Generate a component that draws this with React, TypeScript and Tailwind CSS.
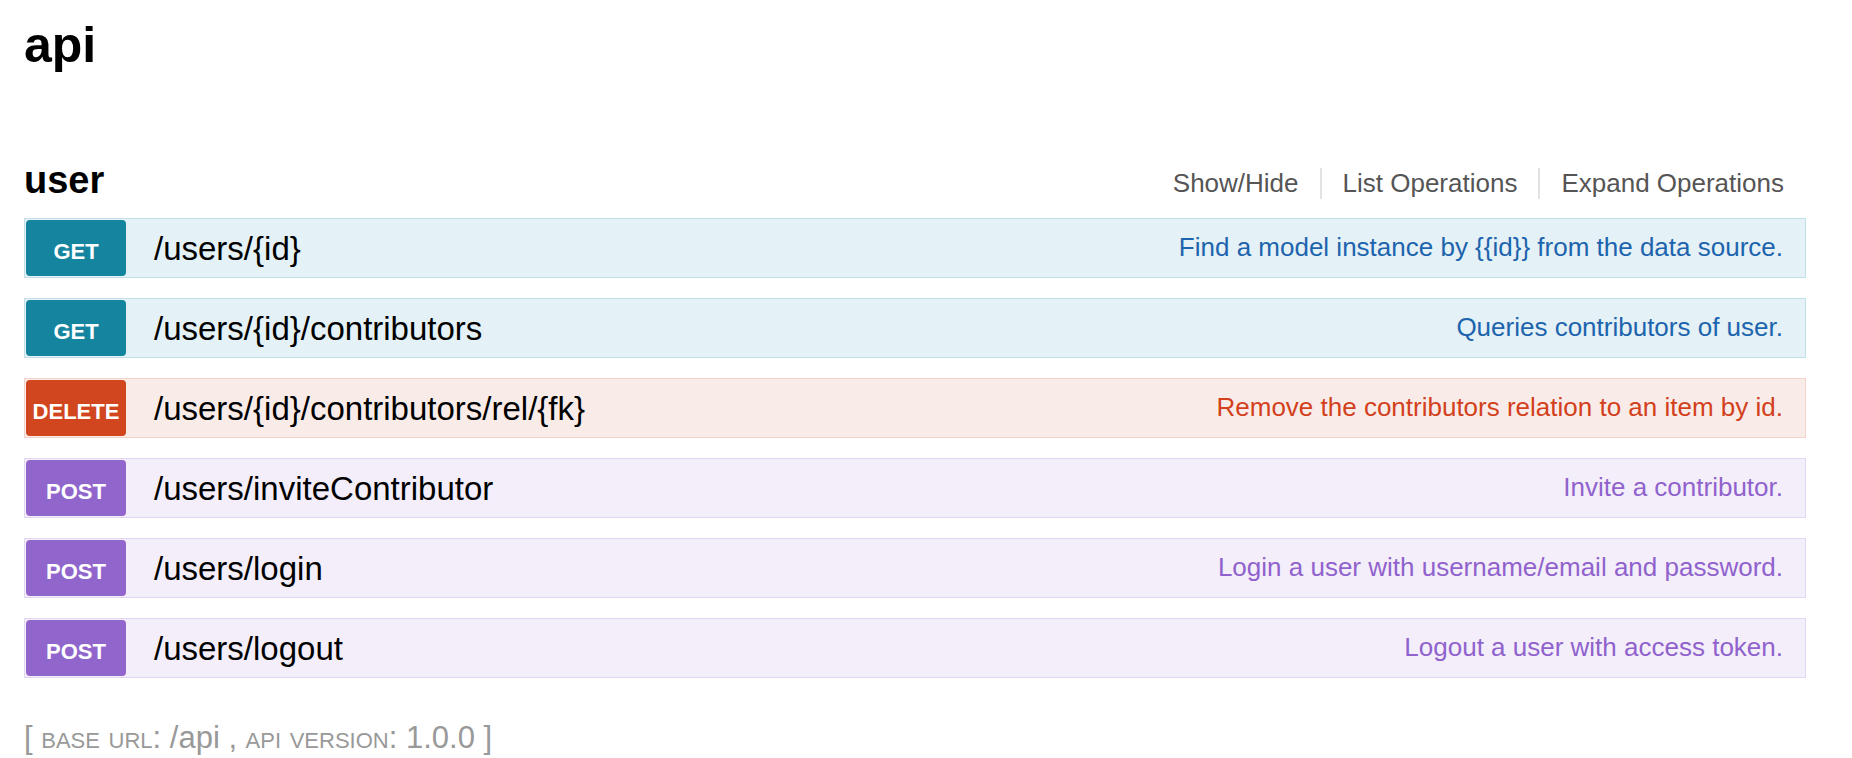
const ops = [
  { method: 'GET', path: '/users/{id}', summary: 'Find a model instance by {{id}} from the data source.' },
  { method: 'GET', path: '/users/{id}/contributors', summary: 'Queries contributors of user.' },
  { method: 'DELETE', path: '/users/{id}/contributors/rel/{fk}', summary: 'Remove the contributors relation to an item by id.' },
  { method: 'POST', path: '/users/inviteContributor', summary: 'Invite a contributor.' },
  { method: 'POST', path: '/users/login', summary: 'Login a user with username/email and password.' },
  { method: 'POST', path: '/users/logout', summary: 'Logout a user with access token.' },
];

const styles: Record<string, { row: string; badge: string; text: string }> = {
  GET: {
    row: 'bg-[#e4f1f6] border-[#c1e0e8]',
    badge: 'bg-[#15849f]',
    text: 'text-[#1d64ae]',
  },
  DELETE: {
    row: 'bg-[#f9ece8] border-[#f2d3c7]',
    badge: 'bg-[#d1461e]',
    text: 'text-[#d3401c]',
  },
  POST: {
    row: 'bg-[#f3eefa] border-[#e2d7f2]',
    badge: 'bg-[#9166cc]',
    text: 'text-[#9062cd]',
  },
};

const links = ['Show/Hide', 'List Operations', 'Expand Operations'];

const App = () => {
  return (
    <div className="min-h-screen bg-white pl-6 pr-[46px] pt-5 font-['Liberation_Sans',Arial,sans-serif] text-black">
      <h1 className="text-[50px] font-bold leading-none">api</h1>

      <div className="mt-[91px]">
        <div className="flex items-end justify-between mb-[19px]">
          <h2 className="text-[38px] font-bold leading-none">user</h2>
          <ul className="flex">
            {links.map((label, i) => (
              <li
                key={label}
                className={`text-[26px] leading-[31px] text-[#555] px-[21px] ${i > 0 ? 'border-l-2 border-[#e2e2e2]' : ''} ${i === links.length - 1 ? 'pr-[22px]' : ''}`}
              >
                {label}
              </li>
            ))}
          </ul>
        </div>

        <div className="flex flex-col gap-5">
          {ops.map((op) => {
            const s = styles[op.method];
            return (
              <div key={op.path} className={`flex items-center h-[60px] border p-px ${s.row}`}>
                <span
                  className={`w-[100px] h-full rounded-[4px] flex items-center justify-center pt-[7px] text-white font-bold text-[22px] leading-none ${s.badge}`}
                >
                  {op.method}
                </span>
                <span className="ml-[28px] text-[33px] leading-none">{op.path}</span>
                <span className={`ml-auto pr-[21px] pb-[3px] text-[26px] leading-none ${s.text}`}>{op.summary}</span>
              </div>
            );
          })}
        </div>
      </div>

      <h4 className="mt-[44px] text-[31px] leading-none text-[#999]">
        [ <span className="[font-variant:small-caps]">base url</span>: /api , <span className="[font-variant:small-caps]">api version</span>: 1.0.0 ]
      </h4>
    </div>
  );
};

export default App;
